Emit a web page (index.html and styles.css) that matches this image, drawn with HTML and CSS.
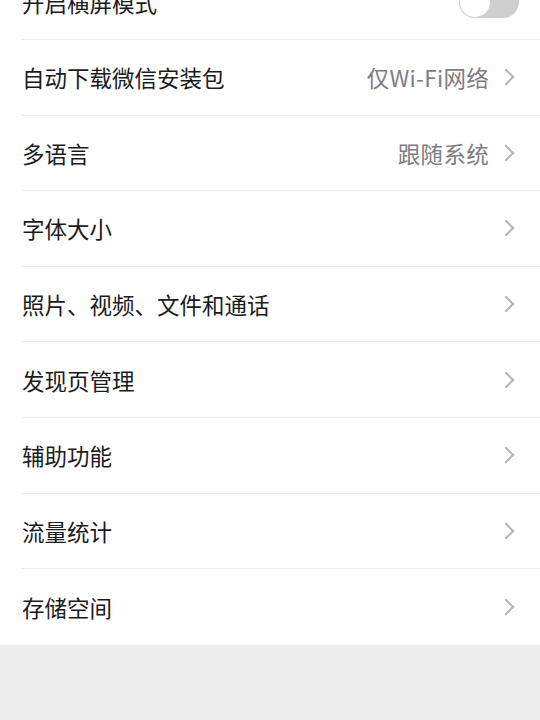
FILE: index.html
```html
<!DOCTYPE html>
<html lang="zh-CN">
<head>
    <meta charset="UTF-8">
    <meta name="viewport" content="width=device-width, initial-scale=1.0">
    <title>通用</title>
    <link rel="stylesheet" href="styles.css">
</head>
<body>
  <div class="list">
    <div class="cell">
      <span class="title">开启横屏模式</span>
      <span class="switch"><span class="knob"></span></span>
    </div>
    <div class="cell">
      <span class="title">自动下载微信安装包</span>
      <span class="value">仅Wi-Fi网络</span>
      <span class="arrow"></span>
    </div>
    <div class="cell">
      <span class="title">多语言</span>
      <span class="value">跟随系统</span>
      <span class="arrow"></span>
    </div>
    <div class="cell">
      <span class="title">字体大小</span>
      <span class="arrow"></span>
    </div>
    <div class="cell">
      <span class="title">照片、视频、文件和通话</span>
      <span class="arrow"></span>
    </div>
    <div class="cell">
      <span class="title">发现页管理</span>
      <span class="arrow"></span>
    </div>
    <div class="cell">
      <span class="title">辅助功能</span>
      <span class="arrow"></span>
    </div>
    <div class="cell">
      <span class="title">流量统计</span>
      <span class="arrow"></span>
    </div>
    <div class="cell last">
      <span class="title">存储空间</span>
      <span class="arrow"></span>
    </div>
  </div>
</body>
</html>
```

FILE: styles.css
```css
html, body{
  margin: 0;
  height: 100%;
  background-color: #ededed;
  font-family: "Noto Sans CJK SC", "Noto Sans", sans-serif;
  overflow: hidden;
}

.list{
  background-color: #fff;
  margin-top: -35.6px;
  padding-left: 22px;
}

.cell{
  display: flex;
  align-items: center;
  height: 75.6px;
  box-sizing: border-box;
  border-bottom: 1px solid #ececec;
  padding-right: 25px;
  margin-left: -1px;
  padding-left: 1px;
}

.cell.last{
  border-bottom: none;
}

.title{
  flex: 1;
  font-size: 22.5px;
  color: #1a1a22;
}

.value{
  font-size: 22.5px;
  color: #7d7d84;
  margin-right: 11px;
  letter-spacing: 0.3px;
}

.arrow{
  width: 10px;
  height: 10px;
  border-top: 2px solid #b4b4ba;
  border-right: 2px solid #b4b4ba;
  transform: rotate(45deg);
  margin-right: 3px;
}

.switch{
  position: relative;
  width: 60px;
  height: 32px;
  border-radius: 16px;
  background-color: #cfcfcf;
  margin-right: -4px;
}

.knob{
  position: absolute;
  left: 1px;
  top: 1px;
  width: 30px;
  height: 30px;
  border-radius: 50%;
  background-color: #fff;
  box-shadow: 0 0 1px 1px #d4d4d4;
}
```
